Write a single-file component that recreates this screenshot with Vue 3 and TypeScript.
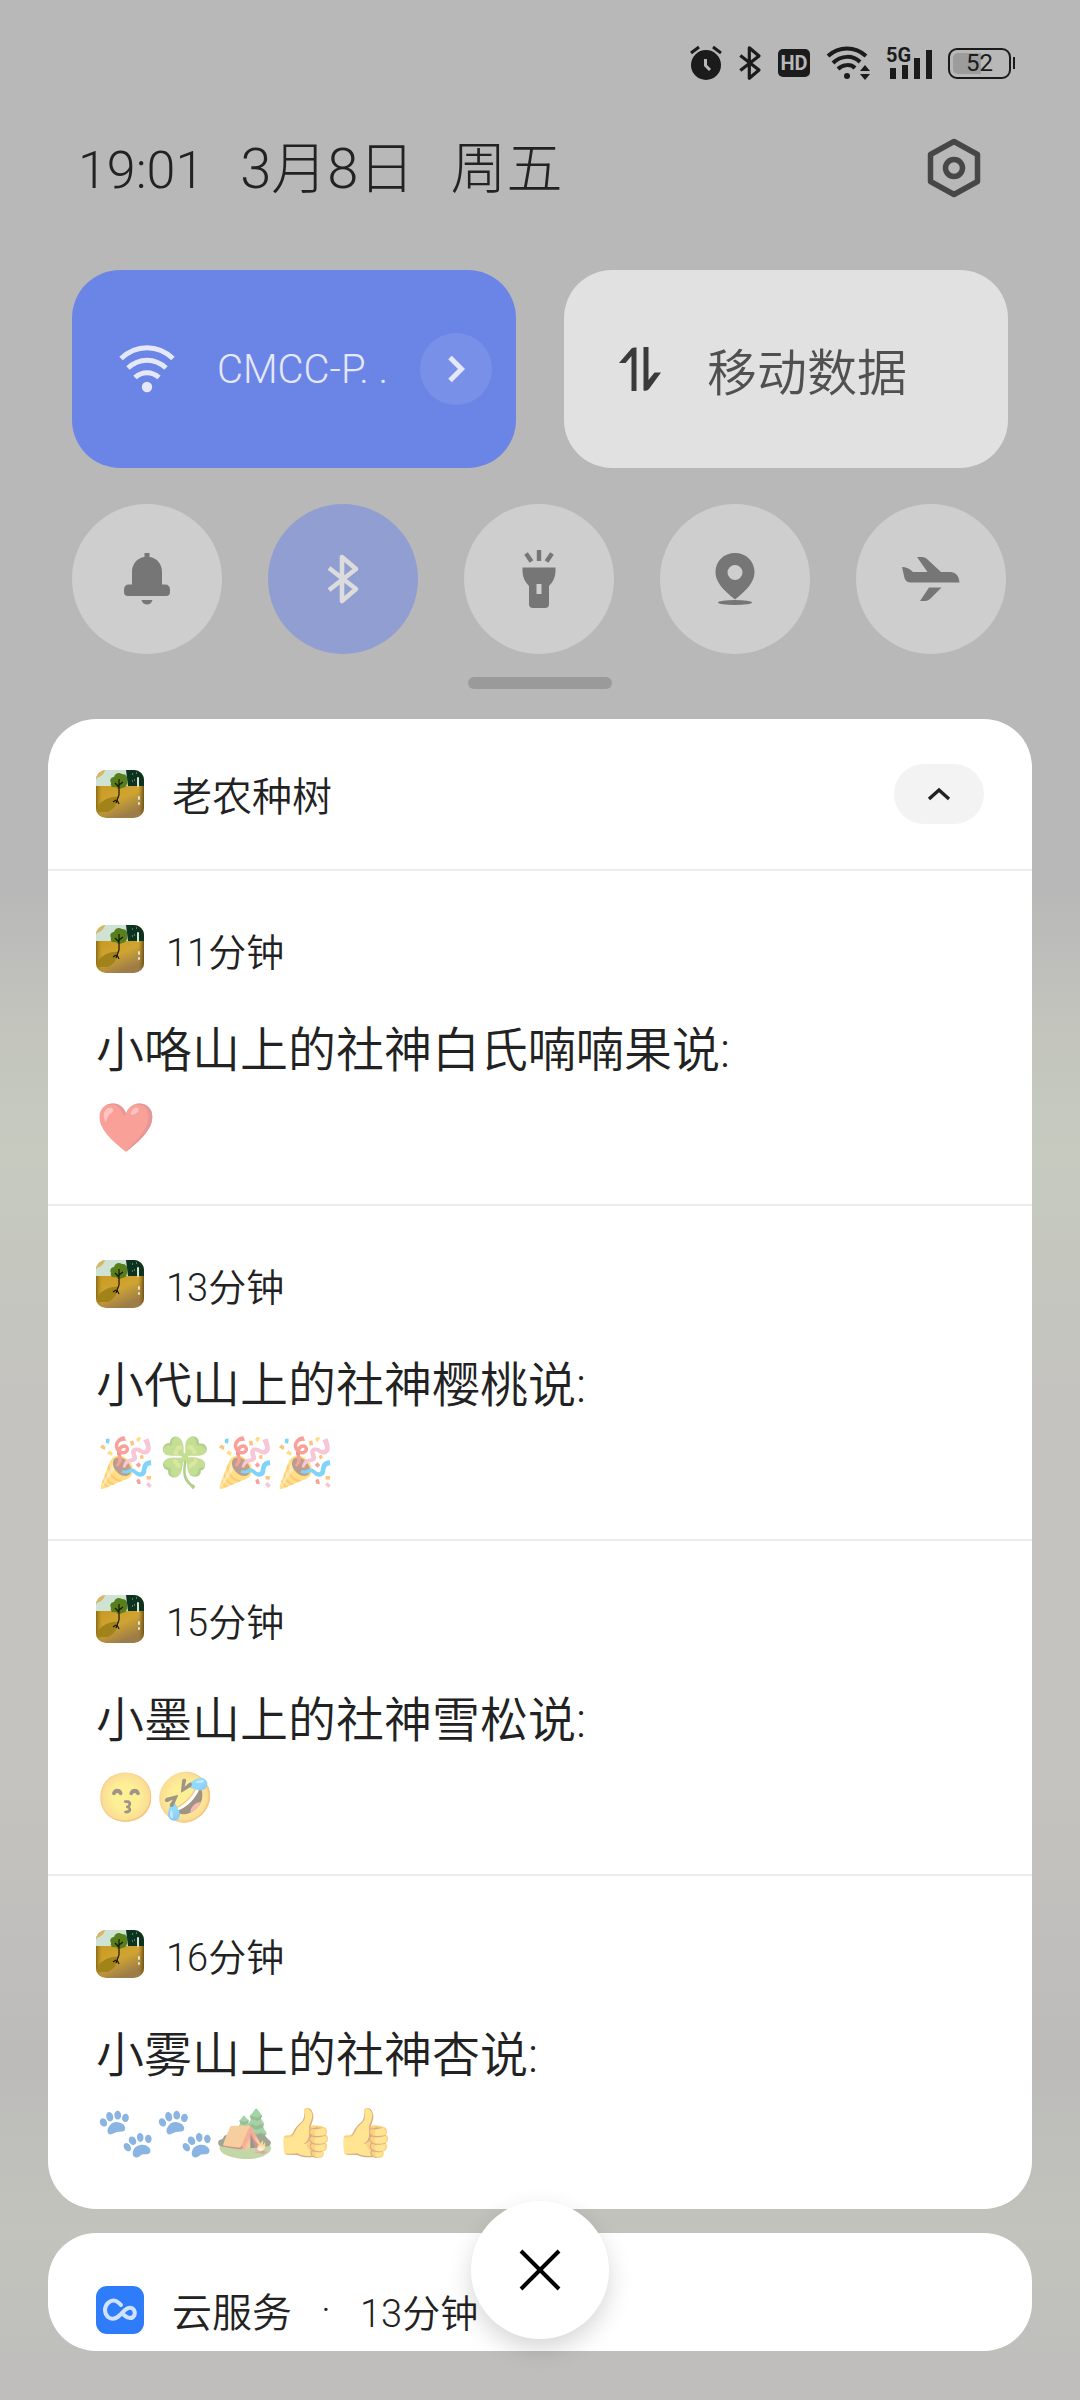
<script setup lang="ts">
interface Notice {
  id: number
  time: string
  title: string
  body: string
}

interface Toggle {
  id: string
  label: string
  active: boolean
}

const appName = '老农种树'

const notices: Notice[] = [
  { id: 1, time: '11分钟', title: '小咯山上的社神白氏喃喃果说:', body: '❤️' },
  { id: 2, time: '13分钟', title: '小代山上的社神樱桃说:', body: '🎉🍀🎉🎉' },
  { id: 3, time: '15分钟', title: '小墨山上的社神雪松说:', body: '😙🤣' },
  { id: 4, time: '16分钟', title: '小雾山上的社神杏说:', body: '🐾🐾🏕️👍👍' },
]

const toggles: Toggle[] = [
  { id: 'bell', label: '响铃', active: false },
  { id: 'bluetooth', label: '蓝牙', active: true },
  { id: 'torch', label: '手电筒', active: false },
  { id: 'location', label: '位置', active: false },
  { id: 'plane', label: '飞行模式', active: false },
]
</script>

<template>
  <div class="shade">
    <svg class="sprite" aria-hidden="true">
      <defs>
        <linearGradient id="field" x1="0.2" y1="0.3" x2="0.5" y2="1">
          <stop offset="0" stop-color="#c99b22" />
          <stop offset="0.5" stop-color="#d0a432" />
          <stop offset="1" stop-color="#9c7c48" />
        </linearGradient>
        <linearGradient id="gloss" x1="0" y1="0" x2="1" y2="0">
          <stop offset="0" stop-color="#8a6a10" />
          <stop offset="0.15" stop-color="#c8a030" stop-opacity="0" />
          <stop offset="0.88" stop-color="#a07818" stop-opacity="0" />
          <stop offset="1" stop-color="#6e5214" />
        </linearGradient>
        <clipPath id="appClip"><rect width="48" height="48" rx="10" /></clipPath>
      </defs>
      <symbol id="app-icon" viewBox="0 0 48 48">
        <g clip-path="url(#appClip)">
          <rect width="48" height="48" fill="url(#field)" />
          <rect width="48" height="48" fill="url(#gloss)" />
          <path d="M0 0H34V16H0Z" fill="#cfe3d4" />
          <path d="M0 0H9C8 4 5 7 0 8Z" fill="#d9b560" />
          <path d="M30 0H48V16H32Z" fill="#0b3320" />
          <path d="M22 27C15 26 6 30 2 36V42L12 42C17 40 22 34 22 27Z" fill="#a1831a" />
          <path d="M15 13C13 9 16 7 18 7C19 3 23 2 26 4C30 4 32 7 31 10C32 14 30 18 26 18C23 20 20 18 20 17C16 18 14 16 15 13Z" fill="#587f1c" />
          <path d="M23 9V25M23 17L19 13M23 15L27 12M23 25L20 33M20 30L17 32M21 30L23 34" fill="none" stroke="#1a1606" stroke-width="1.200" />
          <path d="M42 8V16M43 27V29M43 33V34" stroke="#dfe5d0" stroke-width="2" stroke-linecap="round" />
          <path d="M36 4H37M38 10H39M36 11H37M40 3H41" stroke="#9fc3a6" stroke-width="1.200" />
        </g>
      </symbol>
      <symbol id="bt" viewBox="0 0 34 52">
        <path d="M3 15L30 36L16 48V4L30 16L3 37" fill="none" stroke="currentColor" stroke-width="4.600" stroke-linejoin="round" />
      </symbol>
    </svg>

    <div class="status">
      <svg width="32" height="36" viewBox="0 0 32 36" aria-label="闹钟">
        <circle cx="16" cy="20" r="15" fill="#1b1b1b" />
        <path d="M1 8L9 2M31 8L23 2" stroke="#1b1b1b" stroke-width="3" />
        <path d="M15.500 14V20.500L20 25" fill="none" stroke="#b8b8b8" stroke-width="3" />
      </svg>
      <svg width="24" height="36" aria-label="蓝牙"><use href="#bt" /></svg>
      <span class="hd">HD</span>
      <svg width="44" height="36" viewBox="0 0 44 36" aria-label="无线网络">
        <g fill="none" stroke="#1b1b1b" stroke-width="4">
          <path d="M2 11C13 1 29 1 40 11" />
          <path d="M7 18C15 10 27 10 34 17" />
          <path d="M12 24C17 19 25 19 29 23" />
        </g>
        <circle cx="21" cy="31" r="3" fill="#1b1b1b" />
        <path d="M34 26L39 20L44 26ZM34 29H44L39 35Z" fill="#1b1b1b" />
      </svg>
      <span class="signal">
        <svg width="46" height="36" viewBox="0 0 46 36" aria-label="信号">
          <path d="M7 23V34M19 20V34M31 13V34M43 5V34" stroke="#1b1b1b" stroke-width="6" />
        </svg>
        <span class="five-g">5G</span>
      </span>
      <span class="battery">
        <span class="cell"><span class="level">52</span></span>
        <span class="tip"></span>
      </span>
    </div>

    <header class="head">
      <h1 class="clock">
        <span class="hour">19:01</span>
        <span>3月8日</span>
        <span>周五</span>
      </h1>
      <button class="gear" type="button" aria-label="设置">
        <svg width="54" height="60" viewBox="0 0 54 60">
          <path d="M27 3.500L50.500 16.500V43.500L27 56.500L3.500 43.500V16.500Z" fill="none" stroke="#474747" stroke-width="5.500" stroke-linejoin="round" />
          <circle cx="27" cy="30" r="8.500" fill="none" stroke="#474747" stroke-width="5.500" />
        </svg>
      </button>
    </header>

    <section class="tiles">
      <div class="tile on">
        <svg width="56" height="48" viewBox="0 0 56 48" aria-hidden="true">
          <g fill="none" stroke="#e4e8f8" stroke-width="5">
            <path d="M2 13.500C17 -1 39 -1 54 13.500" />
            <path d="M9 23C20 12.500 36 12.500 47 23" />
            <path d="M16 32.500C23 26 33 26 40 32.500" />
          </g>
          <circle cx="28" cy="42" r="5.200" fill="#e4e8f8" />
        </svg>
        <span class="ssid">CMCC-P. .</span>
        <button class="more" type="button" aria-label="更多无线网络">
          <svg width="18" height="28" viewBox="0 0 18 28">
            <path d="M3 2.500L14.500 14L3 25.500" fill="none" stroke="#e4e8f8" stroke-width="5" />
          </svg>
        </button>
      </div>
      <button class="tile" type="button">
        <svg width="42" height="44" viewBox="0 0 42 44" aria-hidden="true">
          <path d="M17.500 44H12.500V9L6.500 16H0L12.500 1.500Q14 0 17.500 0.500ZM24.500 0H29.500V33L35.500 25.500H42L30 42Q28 44.500 24.500 43.500Z" fill="#3a3a3a" />
        </svg>
        <span class="tile-name">移动数据</span>
      </button>
    </section>

    <section class="toggles">
      <button
        v-for="t in toggles"
        :key="t.id"
        type="button"
        class="round"
        :class="{ active: t.active }"
        :aria-label="t.label"
        :aria-pressed="t.active"
      >
        <svg v-if="t.id === 'bell'" width="46" height="52" viewBox="0 0 46 52">
          <path d="M20.500 0H25.500V4C33 5 38 11 38 19V31.500H41Q46 31.500 46 37V39Q46 43 42 43H4Q0 43 0 39V37Q0 31.500 5 31.500H8V19C8 11 13 5 20.500 4ZM17.500 47H28.500C27 53 19 53 17.500 47Z" fill="#767676" />
        </svg>
        <svg v-else-if="t.id === 'bluetooth'" class="round-bt" width="34" height="52"><use href="#bt" /></svg>
        <svg v-else-if="t.id === 'torch'" width="34" height="58" viewBox="0 0 34 58">
          <path d="M17 0V11M4 3.500L9.500 11.500M30 3.500L24.500 11.500" stroke="#767676" stroke-width="4.400" />
          <path d="M0.500 17.500H33.500V22Q33 30 27 36V54Q27 58 23 58H11Q7 58 7 54V36Q1 30 0.500 22ZM14.500 34V44H19.500V34Z" fill="#767676" fill-rule="evenodd" />
        </svg>
        <svg v-else-if="t.id === 'location'" width="40" height="52" viewBox="0 0 40 52">
          <path d="M20 0C31 0 39.500 8 39.500 19C39.500 29 32 37 20 46.500C8 37 0.500 29 0.500 19C0.500 8 9 0 20 0ZM20 12A7.500 7.500 0 1 0 20 27A7.500 7.500 0 1 0 20 12Z" fill="#767676" fill-rule="evenodd" />
          <ellipse cx="20" cy="49.500" rx="17" ry="2.500" fill="#767676" />
        </svg>
        <svg v-else width="58" height="46" viewBox="0 0 58 46">
          <path d="M0 11Q6 11 11 16H25.500L15 1H20Q23 1 25 3L39 16H49Q57 17 57.500 26.500H9Q4 26.500 2.500 22ZM27 31.500H39.500L28 43Q26 45 23 45H18Z" fill="#767676" />
        </svg>
      </button>
    </section>

    <div class="handle"></div>

    <main class="group">
      <div class="group-head">
        <svg class="app" aria-hidden="true"><use href="#app-icon" /></svg>
        <h2 class="app-name">{{ appName }}</h2>
        <button class="fold" type="button" aria-label="收起">
          <svg width="24" height="14" viewBox="0 0 24 14">
            <path d="M2 12L12 3L22 12" fill="none" stroke="#222" stroke-width="3.400" />
          </svg>
        </button>
      </div>
      <article v-for="n in notices" :key="n.id" class="notice">
        <div class="meta">
          <svg class="app" aria-hidden="true"><use href="#app-icon" /></svg>
          <time class="time">{{ n.time }}</time>
        </div>
        <h3 class="title">{{ n.title }}</h3>
        <p class="body">{{ n.body }}</p>
      </article>
    </main>

    <div class="bottom">
      <article class="cloud">
        <svg width="48" height="48" viewBox="0 0 48 48" aria-hidden="true">
          <rect width="48" height="48" rx="11" fill="#2f7cfb" />
          <path d="M25 19C21 14 16 13 12 17C8 21 8 27 12 31C16 34 20 33 24 29L29 24C32 21 36 21 38 24C40 28 38 32 34 32C32 32 30 31 28 29" fill="none" stroke="#cfe2ff" stroke-width="4" stroke-linecap="round" />
        </svg>
        <span class="cloud-name">云服务</span>
        <span class="dot">·</span>
        <time class="time">13分钟</time>
      </article>
      <button class="clear" type="button" aria-label="清除全部">
        <svg width="42" height="42" viewBox="0 0 42 42">
          <path d="M2 2L40 40M40 2L2 40" stroke="#000" stroke-width="4" />
        </svg>
      </button>
    </div>
  </div>
</template>

<style>
body {
  margin: 0;
}
</style>

<style scoped>
.shade {
  box-sizing: border-box;
  min-height: 100vh;
  padding: 44px 48px 48px;
  font-family: Roboto, "Noto Sans CJK SC", "Noto Color Emoji", sans-serif;
  font-weight: 350;
  color: #222;
  background:
    linear-gradient(180deg, #b8b8b8 0%, #b8b8b8 37%, #c3c5bd 43%, #c6cabf 48%, #c4c3bf 58%, #c4c3bf 74%, #bcbbba 86%, #c2c3bc 93%, #bebdbc 100%);
}

.sprite {
  position: absolute;
  width: 0;
  height: 0;
}

button {
  display: flex;
  align-items: center;
  justify-content: center;
  flex: none;
  margin: 0;
  padding: 0;
  border: 0;
  font: inherit;
  color: inherit;
  background: none;
}

svg {
  display: block;
  flex: none;
}

.status {
  display: flex;
  align-items: center;
  justify-content: flex-end;
  gap: 16px;
  height: 38px;
  padding-right: 17px;
  color: #1b1b1b;
}

.hd {
  width: 32px;
  border-radius: 5px;
  background: #1b1b1b;
  color: #b8b8b8;
  font-size: 20px;
  font-weight: 700;
  line-height: 28px;
  text-align: center;
}

.signal {
  position: relative;
}

/* The network type lies over the shorter signal bars. */
.five-g {
  position: absolute;
  top: -2px;
  left: 0;
  font-size: 20px;
  font-weight: 700;
  line-height: 24px;
}

.battery {
  display: flex;
  align-items: center;
  gap: 2px;
}

.cell {
  box-sizing: border-box;
  width: 63px;
  height: 31px;
  padding: 3px;
  border: 2px solid #1b1b1b;
  border-radius: 9px;
}

.level {
  display: block;
  border-radius: 5px;
  background: linear-gradient(90deg, #9c9c9c 52%, transparent 52%);
  font-size: 24px;
  font-weight: 400;
  line-height: 21px;
  text-align: center;
}

.tip {
  width: 2px;
  height: 12px;
  background: #1b1b1b;
}

.head {
  display: flex;
  align-items: center;
  justify-content: space-between;
  height: 80px;
  margin-top: 46px;
  padding: 0 51px 0 30px;
}

.clock {
  display: flex;
  align-items: baseline;
  gap: 36px;
  margin: 0;
  padding-top: 4px;
  font-size: 56px;
  font-weight: 300;
  line-height: 80px;
  color: #222;
}

.hour {
  font-size: 52px;
}

.tiles {
  display: grid;
  grid-template-columns: 1fr 1fr;
  gap: 48px;
  margin-top: 62px;
  padding: 0 24px;
}

.tile {
  box-sizing: border-box;
  display: flex;
  align-items: center;
  justify-content: flex-start;
  height: 198px;
  padding: 0 24px 0 55px;
  border-radius: 48px;
  background: #e1e1e1;
  color: #505050;
}

.tile.on {
  padding-left: 47px;
  background: #6b85e7;
  color: #e4e8f8;
}

.ssid {
  flex: 1;
  margin-left: 42px;
  font-size: 40px;
  font-weight: 300;
  white-space: nowrap;
}

.more {
  width: 72px;
  height: 72px;
  border-radius: 50%;
  background: #7990e9;
}

.tile-name {
  margin-left: 46px;
  font-size: 50px;
}

.toggles {
  display: flex;
  gap: 46px;
  margin-top: 36px;
  padding: 0 24px;
}

.round {
  width: 150px;
  height: 150px;
  border-radius: 50%;
  background: #cecece;
}

.round.active {
  background: #919ed2;
}

.round-bt {
  color: #dcdcdc;
}

.handle {
  width: 144px;
  height: 12px;
  margin: 23px auto 0;
  border-radius: 6px;
  background: #9a9a9a;
}

.group {
  margin-top: 30px;
  border-radius: 48px;
  background: #fff;
}

.group-head {
  display: flex;
  align-items: center;
  height: 150px;
  padding: 0 48px;
}

.app {
  width: 48px;
  height: 48px;
}

.app-name {
  flex: 1;
  margin: 0 0 0 28px;
  font-size: 40px;
  font-weight: 350;
}

.fold {
  width: 90px;
  height: 60px;
  border-radius: 30px;
  background: #f3f3f3;
}

.notice {
  padding: 54px 48px 46px;
  border-top: 2px solid #ececec;
}

.meta {
  display: flex;
  align-items: center;
  height: 48px;
}

.meta .time {
  margin-left: 22px;
}

.time {
  font-size: 38px;
}

.title {
  margin: 48px 0 0;
  font-size: 48px;
  font-weight: 350;
  line-height: 60px;
}

.body {
  margin: 17px 0 0;
  height: 60px;
  font-size: 48px;
  line-height: 60px;
  opacity: 0.5;
}

.bottom {
  position: relative;
  margin-top: 24px;
}

.cloud {
  box-sizing: border-box;
  display: flex;
  align-items: center;
  height: 118px;
  padding: 36px 48px 0;
  border-radius: 48px;
  background: #fff;
}

.cloud-name {
  margin-left: 28px;
  font-size: 40px;
}

.dot {
  width: 68px;
  font-size: 40px;
  text-align: center;
}

/* Floats over the gap between the two cards. */
.clear {
  position: absolute;
  top: -32px;
  left: 50%;
  width: 138px;
  height: 138px;
  margin-left: -69px;
  border-radius: 50%;
  background: #fff;
  box-shadow: 0 10px 24px rgba(0, 0, 0, 0.16);
}
</style>
